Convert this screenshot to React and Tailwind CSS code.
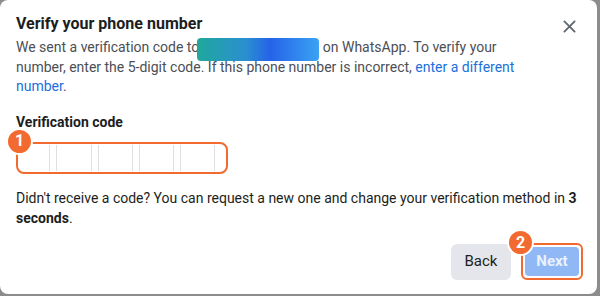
import React from "react";

export default function App() {
  return (
    <div className="w-[600px] h-[296px] bg-[#8c8c8c] overflow-hidden" style={{ fontFamily: "Roboto, 'Liberation Sans', sans-serif" }}>
      <div className="relative w-[597px] h-[294px] bg-white rounded-[8px] flex flex-col">
        <div className="flex items-start justify-between pl-4 pr-[21px] pt-[14px]">
          <h1 className="text-[16px] leading-[20px] font-bold text-[#1c1e21]">Verify your phone number</h1>
          <button className="mt-[6px]">
            <svg width="13" height="13" viewBox="0 0 14 14" fill="none" stroke="#606770" strokeWidth="2" strokeLinecap="round">
              <path d="M1.5 1.5 L12.5 12.5 M12.5 1.5 L1.5 12.5" />
            </svg>
          </button>
        </div>
        <p className="pl-4 w-[548px] text-[14px] leading-[19.5px] text-[#4b4f56] mt-[4px]">
          We sent a verification code to
          <span className="relative inline-block w-[122px] h-0 -ml-[2px]">
            <span className="absolute left-0 -top-[14px] w-[122px] h-[23px] rounded-[4px] bg-[linear-gradient(90deg,#20a89c_0%,#2a8fd0_40%,#2563e8_60%,#3aa3f3_100%)]"></span>
          </span>{" "}
          on WhatsApp. To verify your number, enter the 5-digit code. If this phone number is incorrect,{" "}
          <a className="text-[#216fdb]">enter a different number</a>.
        </p>
        <div className="px-4 mt-[16px] text-[14px] leading-[18px] font-bold text-[#1c1e21]">Verification code</div>
        <div className="px-4 mt-[11px] flex">
          <div className="relative">
            <div className="w-[212px] h-[32px] border-[2.5px] border-[#f26a2f] rounded-[8px] flex items-center gap-[6px]">
              <div className="w-[32px] h-[26px] border-r border-[#dddfe2]"></div>
              <div className="w-[36px] h-[26px] border-x border-[#dddfe2]"></div>
              <div className="w-[35px] h-[26px] border-x border-[#dddfe2]"></div>
              <div className="w-[35px] h-[26px] border-x border-[#dddfe2]"></div>
              <div className="w-[35px] h-[26px] border-x border-[#dddfe2]"></div>
            </div>
            <div className="absolute -left-[10px] -top-[14px] w-[27px] h-[27px] rounded-full bg-[#f26a2f] border-2 border-white flex items-center justify-center text-white font-bold text-[16px]">1</div>
          </div>
        </div>
        <p className="px-4 mt-[14px] text-[14px] leading-[20px] text-[#1c1e21] pr-[20px]">
          Didn't receive a code? You can request a new one and change your verification method in <b>3 seconds</b>.
        </p>
        <div className="mt-auto mb-[14px] flex justify-end items-center gap-[10px] pr-[14px]">
          <button className="w-[60px] h-[36px] rounded-[6px] bg-[#e4e6eb] text-[15px] text-[#1c1e21]">Back</button>
          <div className="relative">
            <div className="w-[62px] h-[37px] border-[2.5px] border-[#f26a2f] rounded-[6px] p-[2px]">
              <div className="w-full h-full rounded-[4px] bg-[#8fb8f5] text-white/80 font-bold text-[15px] flex items-center justify-center">Next</div>
            </div>
            <div className="absolute -left-[14px] -top-[14px] w-[27px] h-[27px] rounded-full bg-[#f26a2f] border-2 border-white flex items-center justify-center text-white font-bold text-[16px]">2</div>
          </div>
        </div>
      </div>
    </div>
  );
}
